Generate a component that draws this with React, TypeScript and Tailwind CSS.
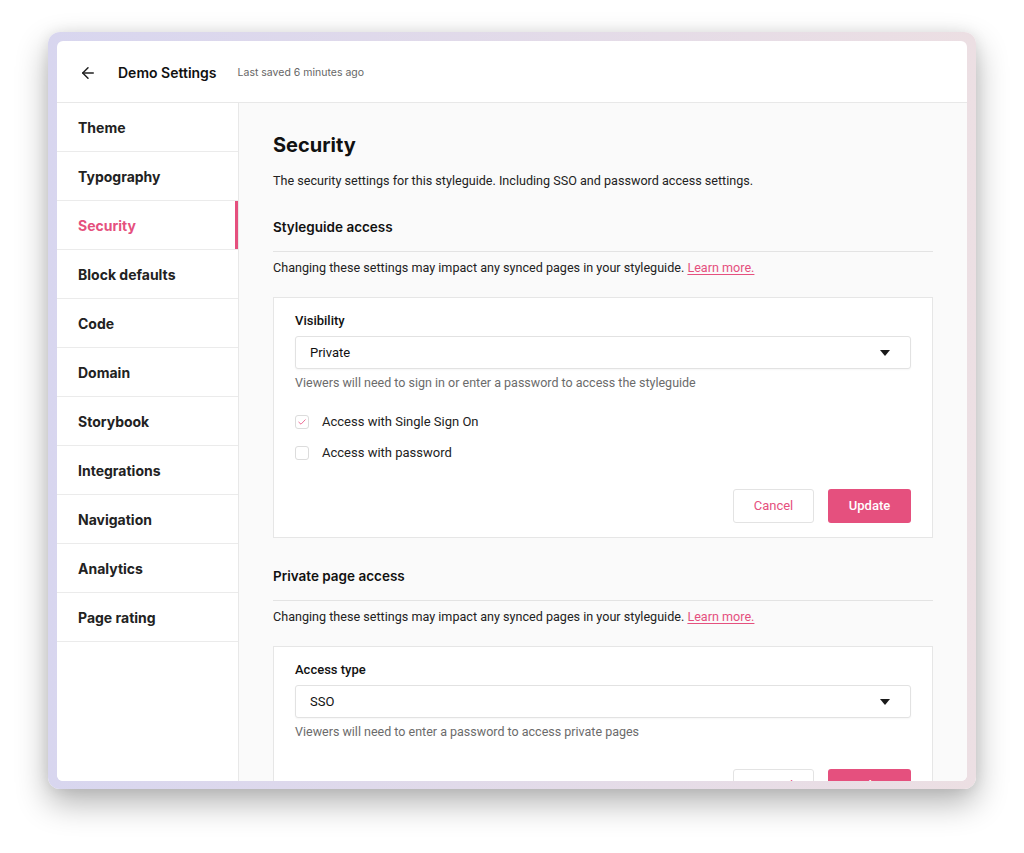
import { ArrowLeft } from 'lucide-react';

const NAV = [
  'Theme',
  'Typography',
  'Security',
  'Block defaults',
  'Code',
  'Domain',
  'Storybook',
  'Integrations',
  'Navigation',
  'Analytics',
  'Page rating',
];

const heading = { fontFamily: 'Inter, "Noto Sans", sans-serif' };
const body = { fontFamily: 'Roboto, "Liberation Sans", sans-serif' };

export default function App() {
  return (
    <div className="h-[853px] w-[1024px] overflow-hidden bg-white pl-[48px] pt-[32px]" style={body}>
      <div className="h-[757px] w-[928px] rounded-[12px] bg-linear-to-r from-[#d8d6ef] to-[#ecdfe3] px-[9px] pb-[8px] pt-[9px] shadow-[0_14px_32px_rgba(0,0,0,0.3),0_0_14px_rgba(0,0,0,0.08)]">
        <div className="flex h-full flex-col overflow-hidden rounded-[6px] bg-white">
          <header className="flex h-[62px] flex-none items-center border-b border-[#e8e8e8] pl-[22px] pt-[2px]" style={heading}>
            <ArrowLeft size={18} strokeWidth={2} className="text-[#222]" />
            <h1 className="ml-[21px] text-[14px] font-semibold text-[#111]">Demo Settings</h1>
            <span className="ml-[21px] text-[10.5px] text-[#666]">Last saved 6 minutes ago</span>
          </header>

          <div className="flex min-h-0 flex-1">
            <nav className="w-[182px] flex-none border-r border-[#e8e8e8] bg-white" style={heading}>
              {NAV.map((item) => (
                <NavItem key={item} label={item} active={item === 'Security'} />
              ))}
            </nav>

            <main className="min-w-0 flex-1 overflow-hidden bg-[#fafafa] px-[34px] pt-[28px] text-[#222]">
              <h2 className="text-[20px] font-bold leading-[28px] text-[#111]" style={heading}>
                Security
              </h2>
              <p className="mt-[12px] text-[12.6px] leading-[20px]">
                The security settings for this styleguide. Including SSO and password access settings.
              </p>

              <Section title="Styleguide access" first>
                <Field label="Visibility" value="Private" hint="Viewers will need to sign in or enter a password to access the styleguide" />
                <div className="mt-[20px] flex flex-col gap-[11px]">
                  <Check checked label="Access with Single Sign On" />
                  <Check label="Access with password" />
                </div>
                <Actions top="mt-[26px]" />
              </Section>

              <Section title="Private page access">
                <Field label="Access type" value="SSO" hint="Viewers will need to enter a password to access private pages" />
                <Actions top="mt-[28px]" />
              </Section>
            </main>
          </div>
        </div>
      </div>
    </div>
  );
}

function NavItem({ label, active }: { label: string; active?: boolean }) {
  return (
    <div className="flex h-[49px] items-stretch border-b border-[#ebebeb]">
      <span className={`flex flex-1 items-center pl-[21px] text-[14px] font-bold ${active ? 'text-[#e5507e]' : 'text-[#222]'}`}>
        {label}
      </span>
      {active && <span className="w-[3px] bg-[#e5507e]" />}
    </div>
  );
}

function Section({ title, first, children }: { title: string; first?: boolean; children: React.ReactNode }) {
  return (
    <section className={first ? 'mt-[26px]' : 'mt-[28px]'}>
      <h3 className="border-b border-[#e3e3e3] pb-[14px] text-[13.5px] font-semibold leading-[20px] text-[#111]" style={heading}>
        {title}
      </h3>
      <p className="mt-[6px] text-[12.6px] leading-[20px]">
        Changing these settings may impact any synced pages in your styleguide.{' '}
        <a className="text-[#e5507e] underline underline-offset-2">Learn more.</a>
      </p>
      <div className="mt-[19px] border border-[#e6e6e6] bg-white px-[21px] pb-[14px] pt-[14px]">{children}</div>
    </section>
  );
}

function Field({ label, value, hint }: { label: string; value: string; hint: string }) {
  return (
    <div>
      <div className="text-[13px] font-medium leading-[18px] text-[#111]">{label}</div>
      <div className="mt-[6px] flex h-[33px] items-center justify-between rounded-[3px] border border-[#e2e2e2] bg-white pl-[14px] pr-[20px] shadow-[0_1px_2px_rgba(0,0,0,0.04)]">
        <span className="text-[13px] text-[#111]">{value}</span>
        <svg width="10" height="6" viewBox="0 0 10 6">
          <path d="M0 0h10L5 6z" fill="#1a1a1a" />
        </svg>
      </div>
      <p className="mt-[5px] text-[12.5px] leading-[18px] text-[#6b6b6b]">{hint}</p>
    </div>
  );
}

function Check({ label, checked }: { label: string; checked?: boolean }) {
  return (
    <label className="flex h-[20px] items-center gap-[13px]">
      <span className="flex h-[14px] w-[14px] items-center justify-center rounded-[3px] border border-[#dcdcdc] bg-white">
        {checked && (
          <svg width="8" height="6" viewBox="0 0 8 6" fill="none">
            <path d="M0.8 3.2L3 5.2L7.2 0.8" stroke="#ec6f96" strokeWidth="1" strokeLinecap="round" strokeLinejoin="round" />
          </svg>
        )}
      </span>
      <span className="text-[13px] text-[#222]">{label}</span>
    </label>
  );
}

function Actions({ top }: { top: string }) {
  return (
    <div className={`${top} flex justify-end gap-[14px]`}>
      <button className="h-[34px] w-[81px] rounded-[3px] border border-[#e3e3e3] bg-white text-[13px] text-[#e5507e]">
        Cancel
      </button>
      <button className="h-[34px] w-[83px] rounded-[3px] bg-[#e5507e] text-[13px] font-medium text-white">Update</button>
    </div>
  );
}
